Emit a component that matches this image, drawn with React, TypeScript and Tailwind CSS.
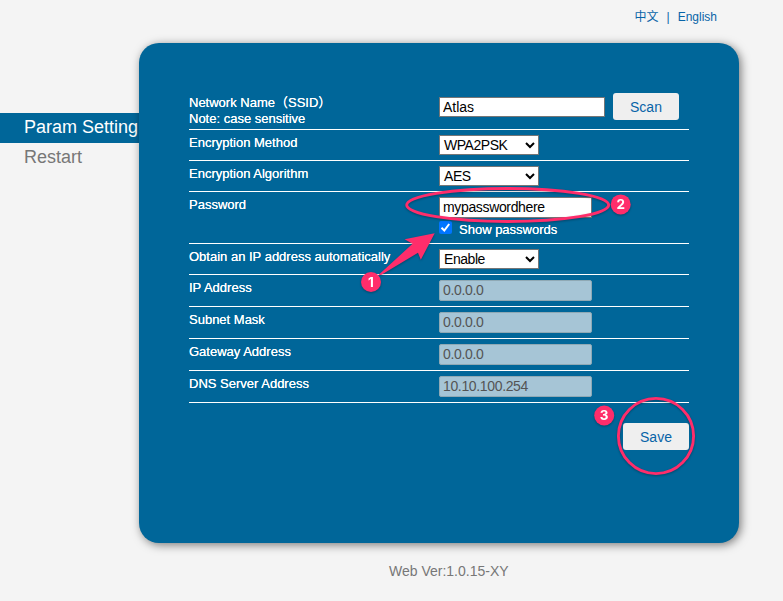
import type { ReactNode } from "react";

function Row({ label, className, children }: { label: ReactNode; className: string; children: ReactNode }) {
  return (
    <div className={`flex border-b border-white ${className}`}>
      <div className="w-[250px] shrink-0 whitespace-nowrap text-[13px] leading-4 text-white [text-shadow:0_0_0.6px_#fff]">{label}</div>
      {children}
    </div>
  );
}

function Select({ value }: { value: string }) {
  return (
    <button className="flex h-5 w-[100px] items-center justify-between border border-[#767676] bg-white pr-[3px] pl-1 text-[14px] leading-[18px] tracking-[-0.45px] text-black">
      {value}
      <svg width="10" height="7" viewBox="0 0 10 7" fill="none" stroke="#000" strokeWidth="2">
        <path d="M1 1l4 4 4-4" />
      </svg>
    </button>
  );
}

function DisabledInput({ value }: { value: string }) {
  return (
    <input
      disabled
      value={value}
      className="h-[21px] w-[153px] rounded-[2px] border border-[#8fa9b5] bg-[#a6c5d6] px-[3px] text-[14px] tracking-[-0.35px] text-[#545454]"
    />
  );
}

function ActionButton({ children }: { children: ReactNode }) {
  return (
    <button className="h-[27px] w-[66px] rounded-[3px] bg-[#efefef] pt-[2px] text-[14px] leading-[25px] text-[#0864a8]">
      {children}
    </button>
  );
}

function Badge({ x, y, n }: { x: number; y: number; n: string }) {
  return (
    <g>
      <circle cx={x} cy={y} r="10" fill="#ff2d6b" />
      <text x={x} y={y + 4.8} textAnchor="middle" fill="#fff" fontSize="13.5" fontWeight="700" fontFamily="Inter, sans-serif">
        {n}
      </text>
    </g>
  );
}

function Annotations() {
  return (
    <svg
      className="pointer-events-none absolute inset-0 drop-shadow-[0_1px_1px_rgba(0,0,0,0.3)]"
      width="783"
      height="601"
      viewBox="0 0 783 601"
    >
      <ellipse cx="507.7" cy="205" rx="101" ry="16.5" fill="none" stroke="#ff2d6b" strokeWidth="2.9" />
      <circle cx="656" cy="436" r="37.6" fill="none" stroke="#ff2d6b" strokeWidth="2.9" />
      <path d="M434.7 233.2L404.6 239.2L412.6 243.7L378.5 275L381 275L418 252.8L420.8 259.8Z" fill="#ff2d6b" />
      <Badge x={371} y={282} n="1" />
      <Badge x={620.7} y={204.4} n="2" />
      <Badge x={604.2} y={415.5} n="3" />
    </svg>
  );
}

export default function App() {
  return (
    <div className="relative h-[601px] w-[783px] overflow-hidden bg-[#f4f4f4] font-['Liberation_Sans','Noto_Sans_CJK_SC',sans-serif]">
      <header className="flex h-[43px] justify-end pt-[9px] pr-[66px] text-[12px] leading-4 text-[#0864a8]">
        <a>中文</a>
        <span className="mx-[8px]">|</span>
        <a>English</a>
      </header>

      <div className="flex">
        <nav className="w-[139px] shrink-0 pt-[70px] text-[18px] whitespace-nowrap">
          <div className="h-[30px] bg-[#006699] pl-6 leading-[29px] text-white">Param Setting</div>
          <div className="h-[30px] pl-6 leading-[29px] text-[#777]">Restart</div>
        </nav>

        <main className="relative h-[500px] w-[600px] rounded-[20px] bg-[#006699] px-[50px] pt-[50px] shadow-[2px_2px_10px_rgba(0,0,0,0.5)]">
          <Row className="h-[37px]" label={<div className="pt-[2px]">Network Name（SSID）<br />Note: case sensitive</div>}>
            <input
              defaultValue="Atlas"
              className="mt-1 mr-2 h-5 w-[166px] border border-[#767676] bg-white px-[3px] text-[14px] text-black"
            />
            <ActionButton>Scan</ActionButton>
          </Row>
          <Row className="h-[31px] pt-[5px]" label="Encryption Method">
            <Select value="WPA2PSK" />
          </Row>
          <Row className="h-[31px] pt-[5px]" label="Encryption Algorithm">
            <Select value="AES" />
          </Row>
          <Row className="h-[52px] pt-[5px]" label="Password">
            <div>
              <input
                defaultValue="mypasswordhere"
                className="block h-[21px] w-[153px] border border-[#767676] bg-white px-[3px] text-[14px] tracking-[-0.35px] text-black"
              />
              <label className="mt-[3px] flex items-start text-[13px] leading-4 text-white [text-shadow:0_0_0.6px_#fff]">
                <span className="mr-[7px] flex size-[13px] items-center justify-center rounded-[2px] bg-[#0075ff]">
                  <svg width="11" height="11" viewBox="0 0 11 11" fill="none" stroke="#fff" strokeWidth="2">
                    <path d="M1.5 5.8l2.8 2.7L9.2 2" />
                  </svg>
                </span>
                <span className="pt-px">Show passwords</span>
              </label>
            </div>
          </Row>
          <Row className="h-[31px] pt-[5px]" label="Obtain an IP address automatically">
            <Select value="Enable" />
          </Row>
          <Row className="h-8 pt-[5px]" label="IP Address">
            <DisabledInput value="0.0.0.0" />
          </Row>
          <Row className="h-8 pt-[5px]" label="Subnet Mask">
            <DisabledInput value="0.0.0.0" />
          </Row>
          <Row className="h-8 pt-[5px]" label="Gateway Address">
            <DisabledInput value="0.0.0.0" />
          </Row>
          <Row className="h-8 pt-[5px]" label="DNS Server Address">
            <DisabledInput value="10.10.100.254" />
          </Row>
          <div className="flex justify-end pt-5">
            <ActionButton>Save</ActionButton>
          </div>
        </main>
      </div>

      <footer className="pt-[19px] pl-[389px] text-[14px] leading-[18px] text-[#777]">Web Ver:1.0.15-XY</footer>
      <Annotations />
    </div>
  );
}
